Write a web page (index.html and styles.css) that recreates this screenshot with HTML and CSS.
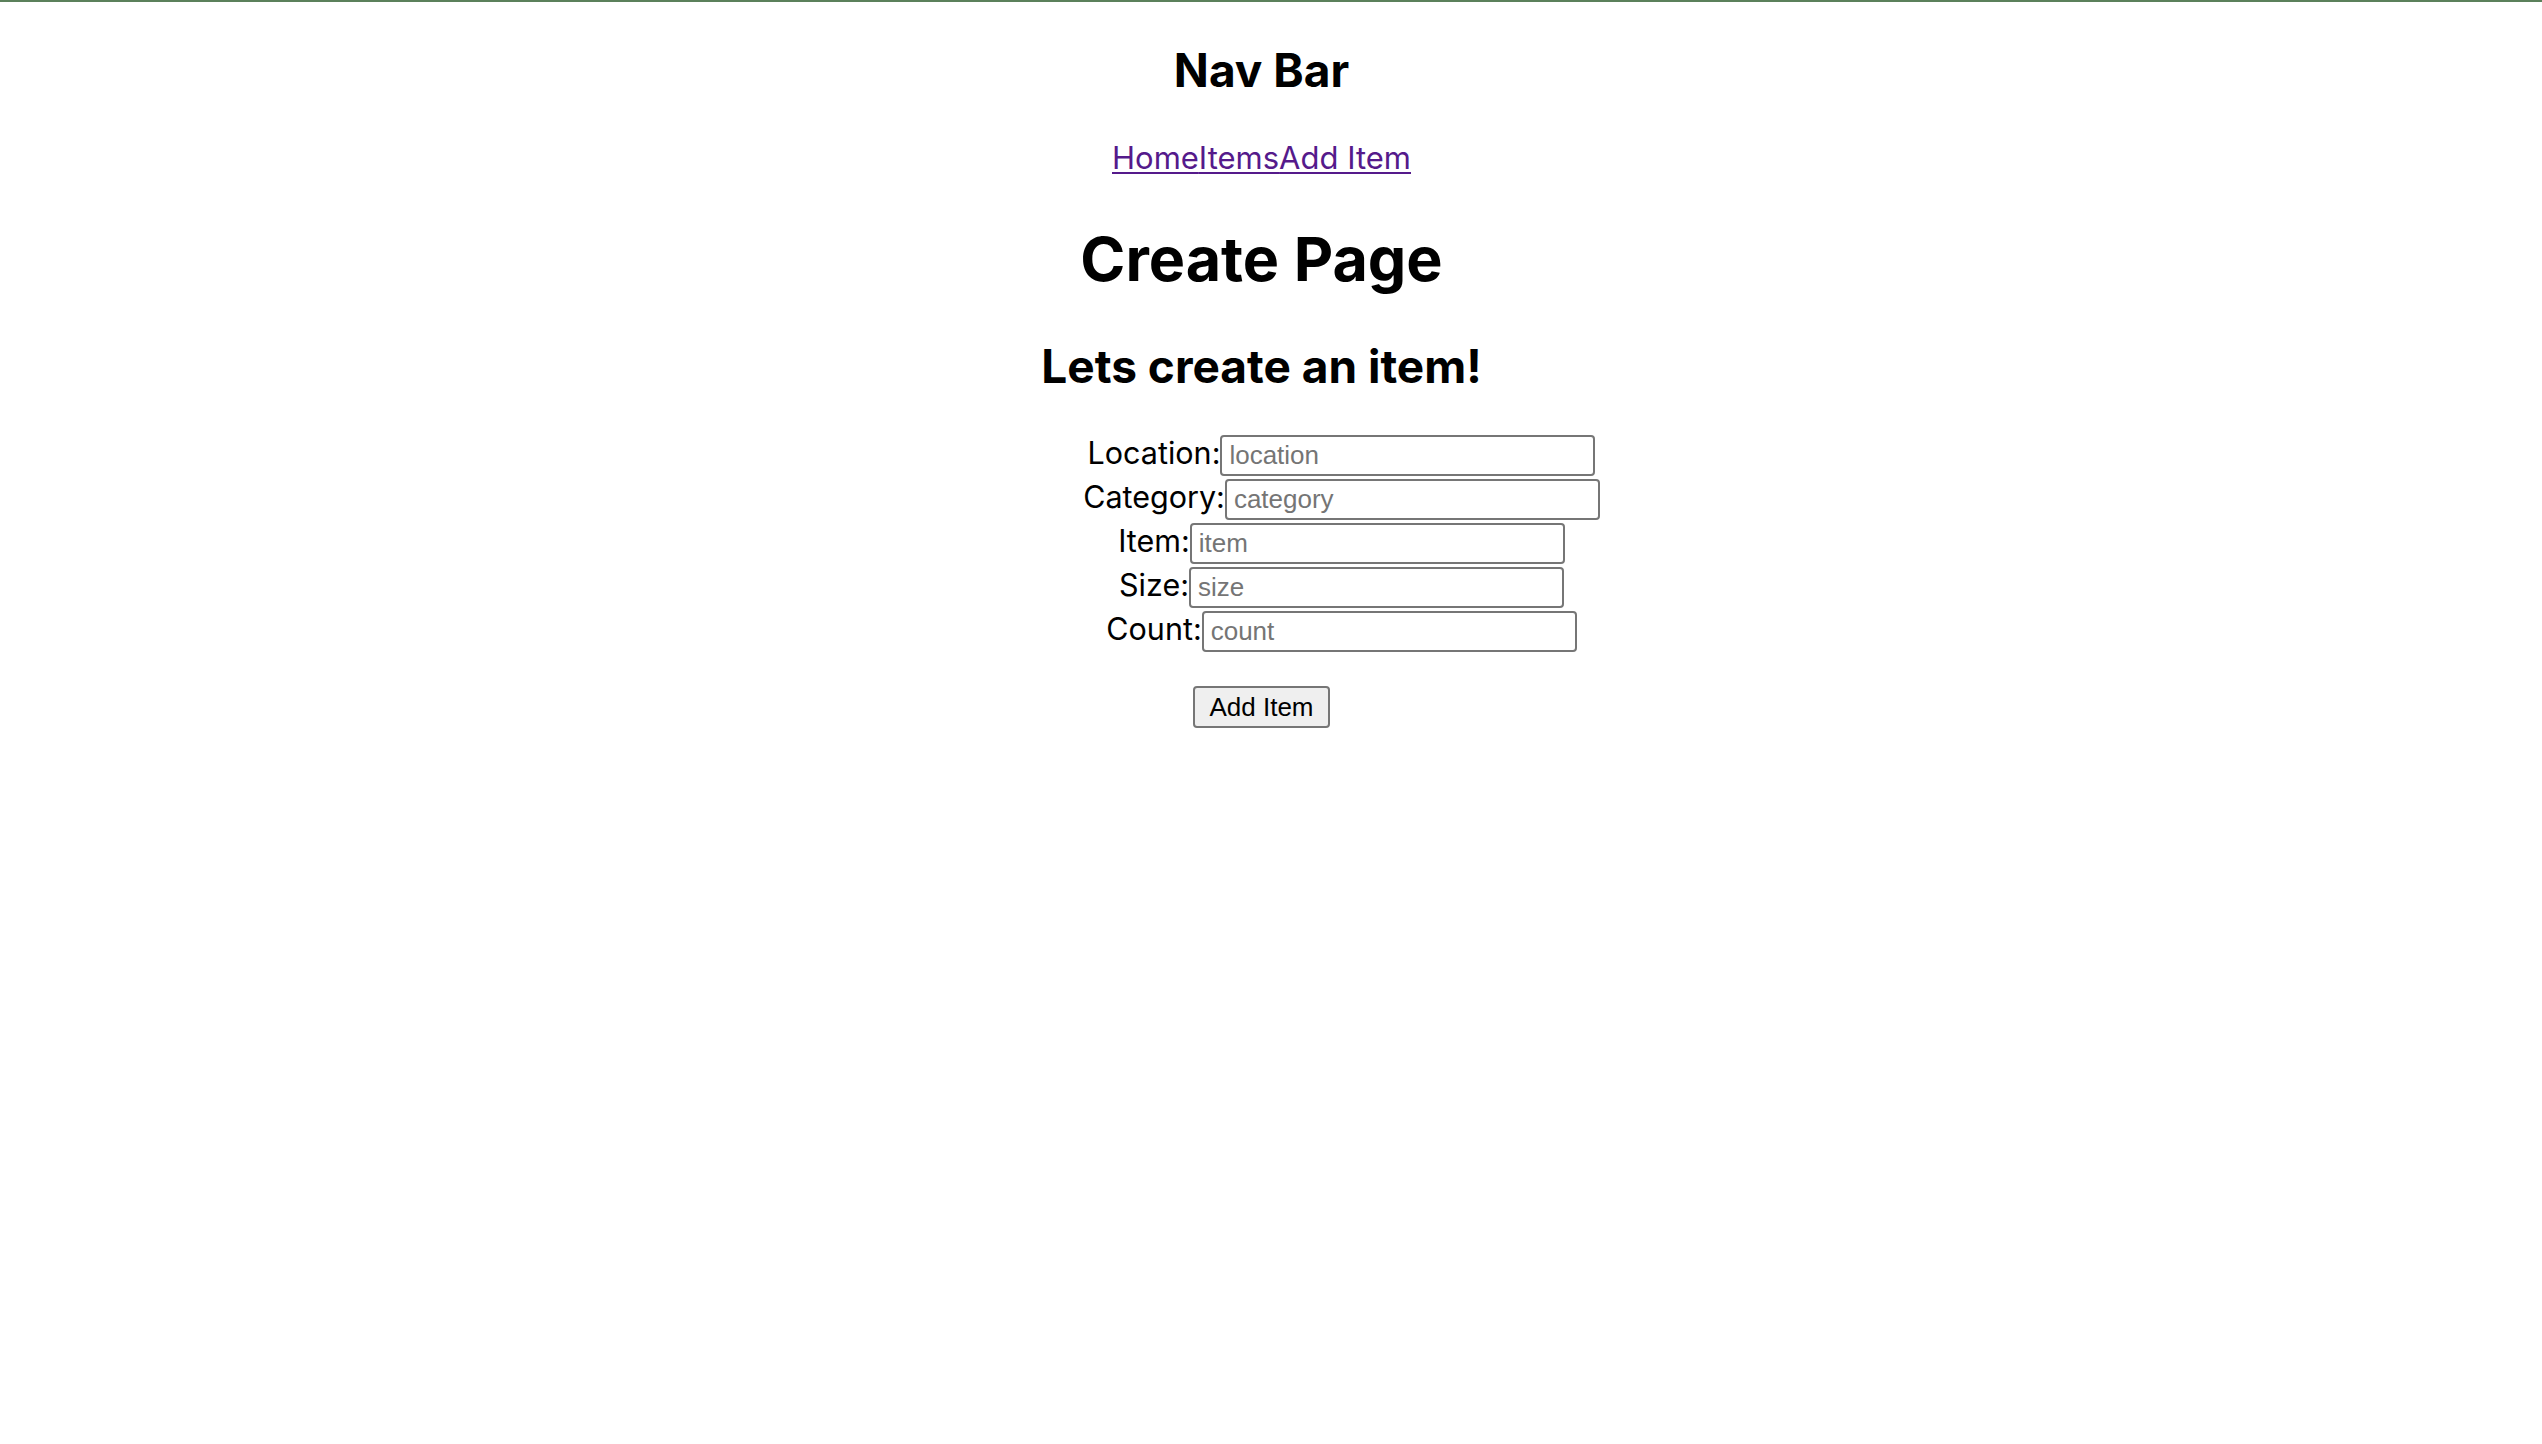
FILE: index.html
```html
<!DOCTYPE html>
<html lang="en">
<head>
<meta charset="utf-8">
<title>Create Page</title>
<link rel="stylesheet" href="styles.css">
</head>
<body>
<div class="topline"></div>
<div class="page">
  <header class="nav">
    <h2 class="nav-title">Nav Bar</h2>
    <nav class="nav-links"><a href="#home">Home</a><a href="#items">Items</a><a href="#add">Add Item</a></nav>
  </header>
  <main class="main">
    <h1 class="page-title">Create Page</h1>
    <h2 class="subtitle">Lets create an item!</h2>
    <form class="form">
      <div class="row"><label class="label" for="location">Location:</label><input class="field" id="location" placeholder="location"></div>
      <div class="row"><label class="label" for="category">Category:</label><input class="field" id="category" placeholder="category"></div>
      <div class="row"><label class="label" for="item">Item:</label><input class="field" id="item" placeholder="item"></div>
      <div class="row"><label class="label" for="size">Size:</label><input class="field" id="size" placeholder="size"></div>
      <div class="row"><label class="label" for="count">Count:</label><input class="field" id="count" placeholder="count"></div>
      <button class="submit" type="button">Add Item</button>
    </form>
  </main>
</div>
</body>
</html>
```
FILE: styles.css
```css
html, body {
  margin: 0;
  padding: 0;
  background: #ffffff;
}

body {
  font-family: Inter, "Noto Sans", sans-serif;
  color: #000000;
}

.topline {
  height: 2px;
  background: #5b805b;
}

.page {
  margin: 0 27px 0 8px;
  text-align: center;
}

.nav-title {
  margin: 42px 0 0;
  font-size: 46px;
  line-height: 53px;
  font-weight: 700;
}

.nav-links {
  margin-top: 43px;
  font-size: 31px;
  line-height: 35px;
}

.nav-links a {
  color: #551a8b;
  text-decoration: underline;
  text-decoration-thickness: 2px;
  text-underline-offset: 3px;
}

.page-title {
  margin: 53px 0 0;
  font-size: 61px;
  line-height: 63px;
  font-weight: 700;
}

.subtitle {
  margin: 49px 0 0;
  font-size: 46px;
  line-height: 53px;
  font-weight: 700;
}

.form {
  margin: 41px 0 0;
  display: flex;
  flex-direction: column;
  gap: 3px;
}

.row {
  display: flex;
  justify-content: center;
  align-items: baseline;
  height: 41px;
  padding-left: 160px;
}

.label {
  font-size: 30.5px;
}

.field {
  box-sizing: border-box;
  width: 375px;
  height: 41px;
  margin: 0;
  padding: 0 7px;
  border: 2px solid #767676;
  border-radius: 4px;
  font-family: "Liberation Sans", Arial, sans-serif;
  font-size: 26px;
  color: #000000;
  background: #ffffff;
}

.field::placeholder {
  color: #757575;
}

.submit {
  align-self: center;
  box-sizing: border-box;
  margin-top: 32px;
  width: 137px;
  height: 42px;
  padding: 0;
  border: 2px solid #767676;
  border-radius: 4px;
  background: #efefef;
  font-family: "Liberation Sans", Arial, sans-serif;
  font-size: 26px;
  color: #000000;
}
```
